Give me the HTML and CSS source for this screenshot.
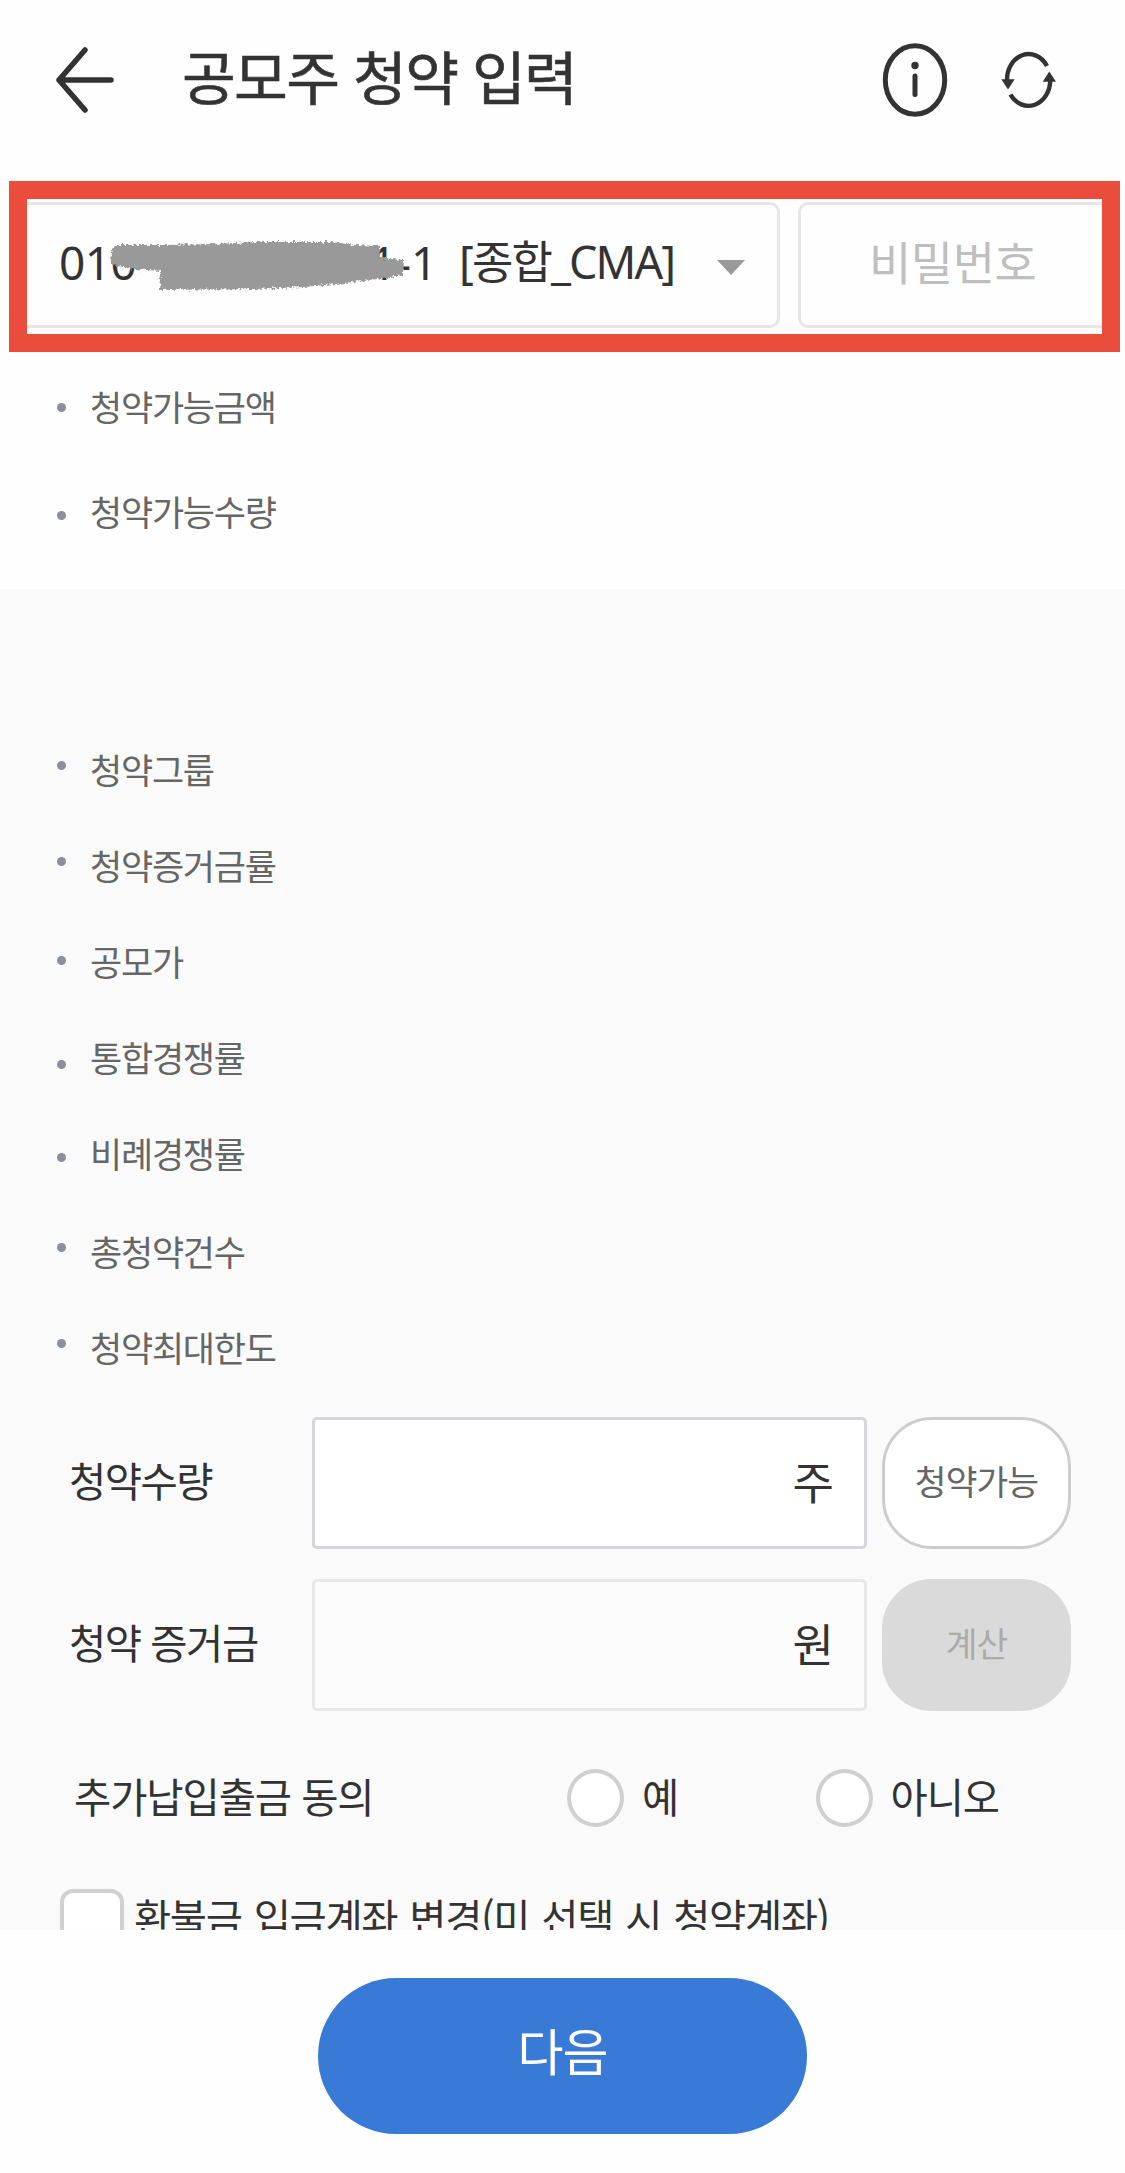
FILE: index.html
```html
<!DOCTYPE html>
<html lang="ko">
<head>
    <meta charset="UTF-8">
    <meta name="viewport" content="width=device-width, initial-scale=1.0">
    <title>공모주 청약 입력</title>
    <link rel="stylesheet" href="styles.css">
</head>
<body>
    <header class="header">
        <svg class="icon-back" width="62" height="70" viewBox="0 0 62 70" fill="none" stroke="#333" stroke-width="5.5" stroke-linecap="round" stroke-linejoin="round">
            <path d="M31 5 L5 35 L31 65 M5 35 H57"/>
        </svg>
        <h1>공모주 청약 입력</h1>
        <svg class="icon-info" width="66" height="76" viewBox="0 0 66 76" fill="none" stroke="#333" stroke-width="5">
            <ellipse cx="33" cy="38" rx="29.7" ry="34.3"/>
            <path d="M33 34 V52.5" stroke-linecap="round"/>
            <circle cx="33" cy="23.5" r="3.7" fill="#333" stroke="none"/>
        </svg>
        <svg class="icon-refresh" width="60" height="60" viewBox="0 0 60 60" fill="none" stroke="#333" stroke-width="4.4">
            <path d="M48 16 A21.7 25.7 0 0 0 8 31" />
            <path d="M11.5 44.5 A21.7 25.7 0 0 0 51.2 30"/>
            <path d="M2.3 29.3 H15.7 L9 39.5 Z M43.7 31.7 H57 L50.3 21.5 Z" fill="#333" stroke="none"/>
        </svg>
    </header>

    <section class="account">
        <div class="select">
            <span class="num">010</span>
            <span class="num last">1-1</span>
            <span class="type">[종합_CMA]</span>
            <i class="arrow"></i>
            <svg class="scribble" width="310" height="60" viewBox="0 0 310 60">
                <filter id="rough" x="-5%" y="-10%" width="110%" height="120%">
                    <feTurbulence type="fractalNoise" baseFrequency="0.35" numOctaves="2" seed="4"/>
                    <feDisplacementMap in="SourceGraphic" scale="6" xChannelSelector="R" yChannelSelector="G"/>
                </filter>
                <path filter="url(#rough)" fill="#999" d="M10 8 L60 8 L110 7 L150 5 L225 5 L250 8 L275 9 L276 21 L298 23 L297 38 L272 42 L240 46 L200 50 L150 52 L55 53 L56 34 L30 32 L7 28 L6 17 Z"/>
            </svg>
        </div>
        <div class="password">비밀번호</div>
    </section>

    <ul class="list available">
        <li>청약가능금액</li>
        <li class="low1">청약가능수량</li>
    </ul>

    <main class="detail">
        <ul class="list">
            <li class="high">청약그룹</li>
            <li class="high">청약증거금률</li>
            <li class="high2">공모가</li>
            <li class="low3">통합경쟁률</li>
            <li class="low2">비례경쟁률</li>
            <li class="high shift">총청약건수</li>
            <li class="high">청약최대한도</li>
        </ul>

        <div class="row">
            <label>청약수량</label>
            <div class="field">주</div>
            <button class="btn">청약가능</button>
        </div>
        <div class="row">
            <label>청약 증거금</label>
            <div class="field readonly">원</div>
            <button class="btn disabled">계산</button>
        </div>

        <div class="agree">
            <span class="agree-title">추가납입출금 동의</span>
            <span class="option"><i class="radio"></i>예</span>
            <span class="option"><i class="radio"></i>아니오</span>
        </div>

        <div class="refund">
            <i class="checkbox"></i>
            <span>환불금 입금계좌 변경(미 선택 시 청약계좌)</span>
        </div>
    </main>

    <footer class="footer">
        <button class="next">다음</button>
    </footer>
</body>
</html>
```
FILE: styles.css
```css
* {
    box-sizing: border-box;
}
body {
    margin: 0;
    height: 2173px;
    overflow: hidden;
    background-color: #fefefe;
    color: #333;
    font-family: 'Noto Sans CJK KR', sans-serif;
    white-space: nowrap;
}
button {
    font-family: inherit;
    padding: 0;
}

/* 상단 */
.header {
    display: flex;
    height: 181px;
    padding-left: 54px;
}
.header h1 {
    flex: 1;
    margin: 35px 0 0 66px;
    font-size: 58.5px;
    font-weight: 400;
    line-height: 80px;
    letter-spacing: -1.7px;
    -webkit-text-stroke: 0.6px #333;
}
.icon-back {
    margin-top: 45px;
}
.icon-info {
    margin: 42px 51px 0 0;
}
.icon-refresh {
    margin: 50px 66px 0 0;
}

/* 계좌 선택 */
.account {
    display: flex;
    width: 1111px;
    height: 171px;
    margin-left: 9px;
    padding-top: 3px;
    border: 18px solid #ea4d3b;
    overflow: hidden;
}
.select {
    position: relative;
    flex: none;
    display: flex;
    align-items: center;
    width: 753px;
    height: 126px;
    padding: 0 0 6px 32px;
    border: 3px solid #e6e6e6;
    border-left: none;
    border-radius: 0 10px 10px 0;
    font-size: 45px;
    line-height: 60px;
}
.num {
    flex: none;
    width: 311px;
    font-family: 'Noto Sans', sans-serif;
    font-size: 46px;
    letter-spacing: -0.5px;
}
.num.last {
    width: 89px;
    letter-spacing: 0;
}
.type {
    flex: none;
    width: 258px;
    font-family: 'Noto Sans', 'Noto Sans CJK KR', sans-serif;
    letter-spacing: -1.9px;
}
.arrow {
    margin-top: 10px;
    border: 14.5px solid transparent;
    border-top: 15px solid #999;
    border-bottom: none;
}
.scribble {
    position: absolute;
    left: 78px;
    top: 32px;
}
.password {
    flex: none;
    width: 330px;
    height: 126px;
    margin-left: 18px;
    padding-left: 68px;
    border: 3px solid #e6e6e6;
    border-radius: 10px;
    color: #bfbfbf;
    font-size: 46px;
    line-height: 110px;
    letter-spacing: -0.5px;
}

/* 항목 리스트 */
.list {
    margin: 0;
    padding: 0 0 0 57px;
    list-style: none;
    color: #666;
    font-size: 35px;
    letter-spacing: -1.25px;
}
.list li {
    display: flex;
    align-items: center;
    height: 96px;
}
.list li::before {
    content: '';
    width: 9px;
    height: 9px;
    margin: 3px 24px 0 0;
    border-radius: 50%;
    background-color: #8a8f99;
}
.available {
    height: 237px;
    padding-top: 1px;
}
.available li {
    height: 105px;
}
.list .low1::before {
    margin-top: 9px;
}
.list .low2::before {
    margin-top: 11px;
}
.list .low3::before {
    margin-top: 17px;
}
.list .high::before {
    margin-top: -6px;
}
.list .high2::before {
    margin-top: 0;
}
.list .shift {
    margin-top: 2px;
}

/* 입력 영역 */
.detail {
    height: 1341px;
    padding-top: 131px;
    background-color: #fafafa;
    overflow: hidden;
}
.row {
    display: flex;
    height: 132px;
    margin: 23px 54px 30px 69px;
}
.row label {
    width: 243px;
    font-size: 40.5px;
    line-height: 126px;
    letter-spacing: -1.5px;
}
.field {
    width: 555px;
    padding-right: 30px;
    border: 3px solid #d5d6d9;
    border-radius: 5px;
    background-color: #fff;
    font-size: 45px;
    line-height: 122px;
    text-align: right;
}
.field.readonly {
    border-color: #e8e8e9;
    background-color: #fcfcfc;
}
.btn {
    width: 189px;
    margin-left: 15px;
    border: 3px solid #cdcdcd;
    border-radius: 50px;
    background-color: #fff;
    color: #666;
    font-size: 34.5px;
    letter-spacing: -0.9px;
    padding-bottom: 7px;
}
.btn.disabled {
    border-color: #dadada;
    background-color: #dadada;
    color: #aaa;
}
.row + .row {
    margin-top: 0;
    margin-bottom: 0;
}

.agree {
    display: flex;
    align-items: center;
    height: 58px;
    margin-top: 58px;
    padding-left: 74px;
    font-size: 40.5px;
    line-height: 53px;
    letter-spacing: -1.1px;
}
.agree-title {
    width: 493px;
    height: 58px;
}
.option {
    display: flex;
    width: 248.5px;
}
.radio {
    width: 57px;
    height: 58px;
    margin-right: 18px;
    border: 4px solid #d0d0d0;
    border-radius: 50%;
    background-color: #fff;
}
.refund {
    display: flex;
    margin-top: 62px;
    padding-left: 60px;
    font-size: 40.5px;
    line-height: 55px;
    letter-spacing: -1.4px;
    word-spacing: 2.2px;
}
.checkbox {
    width: 64px;
    height: 64px;
    margin-right: 10px;
    border: 4.5px solid #d0d0d0;
    border-radius: 13px;
    background-color: #fff;
}

/* 하단 버튼 */
.footer {
    padding-top: 48px;
    text-align: center;
}
.next {
    width: 489px;
    height: 156px;
    border: none;
    border-radius: 78px;
    background-color: #397ad6;
    color: #fff;
    font-size: 50px;
    letter-spacing: -1px;
    padding-bottom: 14px;
}
```
